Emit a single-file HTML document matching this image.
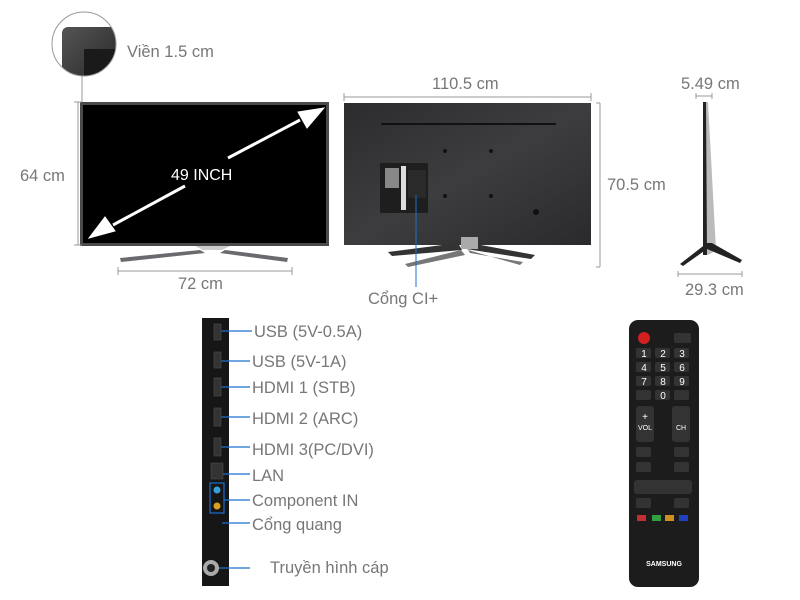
<!DOCTYPE html>
<html><head><meta charset="utf-8"><style>
body{margin:0;background:#fff;width:800px;height:600px;overflow:hidden;font-family:"Liberation Sans",sans-serif}
svg{display:block}
text{font-family:"Liberation Sans",sans-serif}
</style></head><body>
<svg width="800" height="600" viewBox="0 0 800 600" xmlns="http://www.w3.org/2000/svg">
<defs>
<linearGradient id="bk" x1="0" y1="0" x2="1" y2="1"><stop offset="0" stop-color="#2c2c2e"/><stop offset=".5" stop-color="#3d3d40"/><stop offset="1" stop-color="#2a2a2c"/></linearGradient>
<linearGradient id="bz" x1="0" y1="0" x2="1" y2="1"><stop offset="0" stop-color="#555"/><stop offset="1" stop-color="#222"/></linearGradient>
<clipPath id="cc"><circle cx="84" cy="44" r="32"/></clipPath>
</defs>
<g fill="#777" font-size="16.5">
<!-- bezel circle -->
<g clip-path="url(#cc)"><rect x="40" y="0" width="100" height="100" fill="#fff"/><rect x="62" y="27" width="60" height="60" rx="6" fill="url(#bz)"/><rect x="84" y="49" width="40" height="40" fill="#1a1a1a"/></g>
<circle cx="84" cy="44" r="32" fill="none" stroke="#999" stroke-width="1"/>
<line x1="82" y1="76" x2="82" y2="102" stroke="#999"/>
<text x="127" y="57">Viền 1.5 cm</text>
<!-- front TV -->
<rect x="80" y="102" width="249" height="144" fill="#4a4a4c"/>
<rect x="83" y="105" width="243" height="138" fill="#000"/>
<path d="M200 250 L120 258 L121 262 L205 253 Z M225 250 L288 258 L287 262 L220 253 Z" fill="#6a6a6e"/>
<path d="M195 246 L230 246 L222 250 L203 250 Z" fill="#ccc"/>
<g stroke="#fff" stroke-width="3" fill="#fff">
<line x1="113" y1="225" x2="185" y2="186"/><line x1="228" y1="158" x2="300" y2="120"/>
<path d="M89 238 L105 217 L115 231 Z" stroke-width="1"/><path d="M324 108 L298 112 L307 128 Z" stroke-width="1"/>
</g>
<text x="171" y="180" fill="#fff" font-size="16">49 INCH</text>
<g stroke="#999" stroke-width="1"><line x1="78" y1="102" x2="78" y2="245"/><line x1="74" y1="102" x2="82" y2="102"/><line x1="74" y1="245" x2="82" y2="245"/>
<line x1="118" y1="271" x2="292" y2="271"/><line x1="118" y1="267" x2="118" y2="275"/><line x1="292" y1="267" x2="292" y2="275"/>
<line x1="344" y1="97" x2="591" y2="97"/><line x1="344" y1="93" x2="344" y2="101"/><line x1="591" y1="93" x2="591" y2="101"/>
<line x1="600" y1="103" x2="600" y2="267"/><line x1="596" y1="103" x2="600" y2="103"/><line x1="596" y1="267" x2="600" y2="267"/>
<line x1="696" y1="96" x2="712" y2="96"/><line x1="696" y1="93" x2="696" y2="99"/><line x1="712" y1="93" x2="712" y2="99"/>
<line x1="678" y1="274" x2="742" y2="274"/><line x1="678" y1="271" x2="678" y2="277"/><line x1="742" y1="271" x2="742" y2="277"/></g>
<text x="20" y="181">64 cm</text>
<text x="178" y="289">72 cm</text>
<text x="432" y="89">110.5 cm</text>
<text x="607" y="190">70.5 cm</text>
<text x="681" y="89">5.49 cm</text>
<text x="685" y="295">29.3 cm</text>
<!-- back TV -->
<rect x="344" y="103" width="247" height="142" fill="url(#bk)"/>
<rect x="381" y="123" width="175" height="2" fill="#111"/>
<rect x="380" y="163" width="48" height="50" fill="#1e1e1e"/>
<rect x="385" y="168" width="14" height="20" fill="#888"/>
<rect x="401" y="166" width="5" height="44" fill="#ddd"/>
<rect x="408" y="170" width="18" height="28" fill="#2a2a2a"/>
<g fill="#111"><circle cx="445" cy="151" r="2"/><circle cx="491" cy="151" r="2"/><circle cx="445" cy="196" r="2"/><circle cx="491" cy="196" r="2"/><circle cx="536" cy="212" r="3"/></g>
<path d="M458 243 L388 252 L392 256 L462 250 Z M470 243 L535 255 L531 259 L466 249 Z" fill="#333"/>
<path d="M461 250 L405 264 L408 267 L465 255 Z M468 250 L520 265 L523 262 L470 253 Z" fill="#777"/>
<rect x="461" y="237" width="17" height="12" fill="#aaa"/>
<line x1="416" y1="195" x2="416" y2="287" stroke="#1a6fd0" stroke-width="1"/>
<text x="368" y="304">Cổng CI+</text>
<!-- side -->
<path d="M703 102 L708 102 L716 250 L708 255 L703 250 Z" fill="#bbb"/>
<path d="M703 102 L706 102 L707 255 L703 255 Z" fill="#222"/>
<path d="M707 243 L680 264 L683 266 L707 249 L740 263 L742 260 L712 243 Z" fill="#222"/>
<!-- port strip -->
<rect x="202" y="318" width="27" height="268" fill="#161616"/>
<g fill="#333" stroke="#555" stroke-width=".5">
<rect x="214" y="324" width="7" height="16"/><rect x="214" y="352" width="7" height="16"/>
<rect x="214" y="378" width="7" height="18"/><rect x="214" y="408" width="7" height="18"/><rect x="214" y="438" width="7" height="18"/>
<rect x="211" y="463" width="12" height="16"/></g>
<circle cx="217" cy="490" r="3.5" fill="#3aa0d8"/><circle cx="217" cy="506" r="3.5" fill="#d8a020"/>
<rect x="210" y="483" width="14" height="30" fill="none" stroke="#1a6fd0" stroke-width="1.2"/>
<circle cx="211" cy="568" r="8" fill="#aaa"/><circle cx="211" cy="568" r="4" fill="#222"/>
<g stroke="#1a6fd0" stroke-width="1.2">
<line x1="221" y1="331" x2="252" y2="331"/><line x1="221" y1="361" x2="250" y2="361"/><line x1="221" y1="387" x2="250" y2="387"/>
<line x1="221" y1="417" x2="250" y2="417"/><line x1="221" y1="447" x2="250" y2="447"/><line x1="223" y1="474" x2="250" y2="474"/>
<line x1="224" y1="500" x2="250" y2="500"/><line x1="222" y1="523" x2="250" y2="523"/><line x1="219" y1="568" x2="250" y2="568"/></g>
<text x="254" y="337">USB (5V-0.5A)</text>
<text x="252" y="367">USB (5V-1A)</text>
<text x="252" y="393">HDMI 1 (STB)</text>
<text x="252" y="424">HDMI 2 (ARC)</text>
<text x="252" y="455">HDMI 3(PC/DVI)</text>
<text x="252" y="481">LAN</text>
<text x="252" y="506">Component IN</text>
<text x="252" y="530">Cổng quang</text>
<text x="270" y="573">Truyền hình cáp</text>
<!-- remote -->
<rect x="629" y="320" width="70" height="267" rx="9" fill="#1c1c1c"/>
<circle cx="644" cy="338" r="6" fill="#d02020"/>
<rect x="674" y="333" width="17" height="10" rx="2" fill="#333"/>
<g fill="#333">
<rect x="636" y="348" width="15" height="10" rx="2"/><rect x="655" y="348" width="15" height="10" rx="2"/><rect x="674" y="348" width="15" height="10" rx="2"/>
<rect x="636" y="362" width="15" height="10" rx="2"/><rect x="655" y="362" width="15" height="10" rx="2"/><rect x="674" y="362" width="15" height="10" rx="2"/>
<rect x="636" y="376" width="15" height="10" rx="2"/><rect x="655" y="376" width="15" height="10" rx="2"/><rect x="674" y="376" width="15" height="10" rx="2"/>
<rect x="636" y="390" width="15" height="10" rx="2"/><rect x="655" y="390" width="15" height="10" rx="2"/><rect x="674" y="390" width="15" height="10" rx="2"/>
<rect x="636" y="406" width="18" height="36" rx="3"/><rect x="672" y="406" width="18" height="36" rx="3"/>
<rect x="636" y="447" width="15" height="10" rx="2"/><rect x="674" y="447" width="15" height="10" rx="2"/>
<rect x="636" y="462" width="15" height="10" rx="2"/><rect x="674" y="462" width="15" height="10" rx="2"/>
<rect x="634" y="480" width="58" height="14" rx="3"/>
<rect x="636" y="498" width="15" height="10" rx="2"/><rect x="674" y="498" width="15" height="10" rx="2"/>
</g>
<rect x="637" y="515" width="9" height="6" fill="#c03030"/><rect x="652" y="515" width="9" height="6" fill="#30a040"/><rect x="665" y="515" width="9" height="6" fill="#d09020"/><rect x="679" y="515" width="9" height="6" fill="#2040c0"/>
<g fill="#fff" font-size="10" text-anchor="middle">
<text x="644" y="357">1</text><text x="663" y="357">2</text><text x="682" y="357">3</text>
<text x="644" y="371">4</text><text x="663" y="371">5</text><text x="682" y="371">6</text>
<text x="644" y="385">7</text><text x="663" y="385">8</text><text x="682" y="385">9</text>
<text x="663" y="399">0</text><text x="645" y="420">+</text><text x="645" y="430" font-size="7">VOL</text><text x="681" y="430" font-size="7">CH</text>
<text x="664" y="566" font-size="7" font-weight="bold">SAMSUNG</text>
</g>
</g>
</svg>
</body></html>
